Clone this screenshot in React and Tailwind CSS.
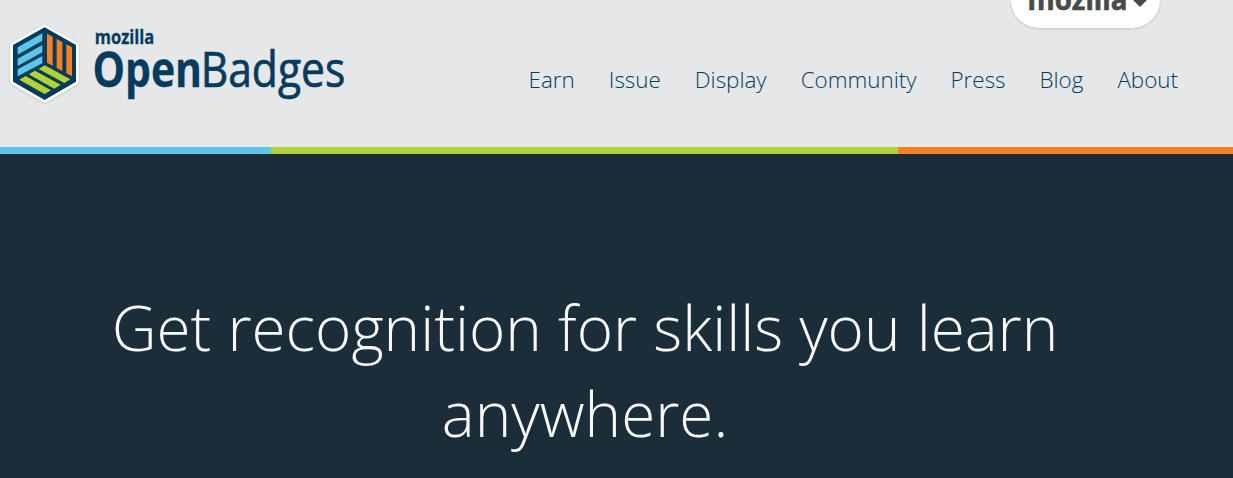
import React from "react";

const links = ["Earn", "Issue", "Display", "Community", "Press", "Blog", "About"];

function Logo() {
  return (
    <svg className="block h-[110px] w-[360px]" viewBox="0 0 360 110" aria-label="Mozilla OpenBadges">
      <defs>
        <filter id="soft" x="-10%" y="-10%" width="120%" height="120%">
          <feDropShadow dx="0" dy="1.5" stdDeviation="3" floodColor="#000" floodOpacity="0.25" />
        </filter>
      </defs>
      <g transform="translate(0 15) scale(0.33333)">
        <path d="M134 37 228 90V200L134 255 39 200V90Z" fill="#fff" stroke="#fff" strokeWidth="16" strokeLinejoin="round" filter="url(#soft)" />
        <path d="M134 37 228 90V200L134 255 39 200V90Z" fill="#053c5e" />
        <g fill="#5bc6e8">
          <path d="M53 97 127 55V77L53 119Z" />
          <path d="M53 131 127 90V112L53 153Z" />
          <path d="M53 163 127 123V145L53 184Z" />
        </g>
        <g fill="#f58025">
          <path d="M141 56 158 65V152L141 143Z" />
          <path d="M170 72 187 81V168L170 159Z" />
          <path d="M199 88 216 97V184L199 175Z" />
        </g>
        <g fill="#b2d235">
          <path d="M134 151 211 193 193 204 116 162Z" />
          <path d="M105 167 182 209 163 221 86 178Z" />
          <path d="M77 183 153 226 134 237 58 194Z" />
        </g>
      </g>
      <g fill="#053c5e" stroke="#053c5e" className="font-['Open_Sans',sans-serif]">
        <text x="94.8" y="43.5" fontSize="19.5" fontWeight="700" strokeWidth="0.3" textLength="59.5" lengthAdjust="spacingAndGlyphs">mozilla</text>
        <text x="92.5" y="87.3" fontSize="48.5" fontWeight="700" strokeWidth="0.3" textLength="109.5" lengthAdjust="spacingAndGlyphs">Open</text>
        <text x="200.7" y="87.3" fontSize="48.5" fontWeight="500" strokeWidth="0.7" textLength="144.5" lengthAdjust="spacingAndGlyphs">Badges</text>
      </g>
    </svg>
  );
}

function MozillaTab() {
  return (
    <div className="absolute top-0 left-[1011px] h-[28px] w-[149px] overflow-hidden rounded-b-[28px] bg-white shadow-[0_1px_3px_rgba(0,0,0,0.15)]">
      <svg className="block h-[28px] w-[149px]" viewBox="0 0 149 28">
        <text x="16.5" y="10" fontSize="28" fontWeight="700" fill="#4a4a4a" stroke="#4a4a4a" strokeWidth="0.6" textLength="100" lengthAdjust="spacingAndGlyphs" className="font-['Open_Sans',sans-serif]">mozilla</text>
        <path d="M121-2H137V-1L129 7 121-1Z" fill="#4a4a4a" />
      </svg>
    </div>
  );
}

export default function App() {
  return (
    <div className="relative flex h-[478px] w-full flex-col overflow-hidden bg-[#1a2d38] font-['Open_Sans',sans-serif]">
      <header className="flex h-[147px] shrink-0 items-start justify-between bg-[#e6e7e8] pr-[55px]">
        <Logo />
        <nav className="flex gap-[34px] pt-[63px] text-[22.4px] leading-[33px] font-light text-[#053c5e]">
          {links.map((l) => (
            <a key={l} href="#">{l}</a>
          ))}
        </nav>
      </header>
      <MozillaTab />
      <div className="flex h-[7px] shrink-0">
        <div className="w-[271px] bg-[#5bc6e8]" />
        <div className="w-[627px] bg-[#b2d235]" />
        <div className="flex-1 bg-[#f58025]" />
      </div>
      <main className="pt-[130px] pr-[63px]">
        <h1 className="text-center text-[62px] leading-[86px] font-light text-[#f8f8f8]">
          Get recognition for skills you learn<br />anywhere.
        </h1>
      </main>
    </div>
  );
}
